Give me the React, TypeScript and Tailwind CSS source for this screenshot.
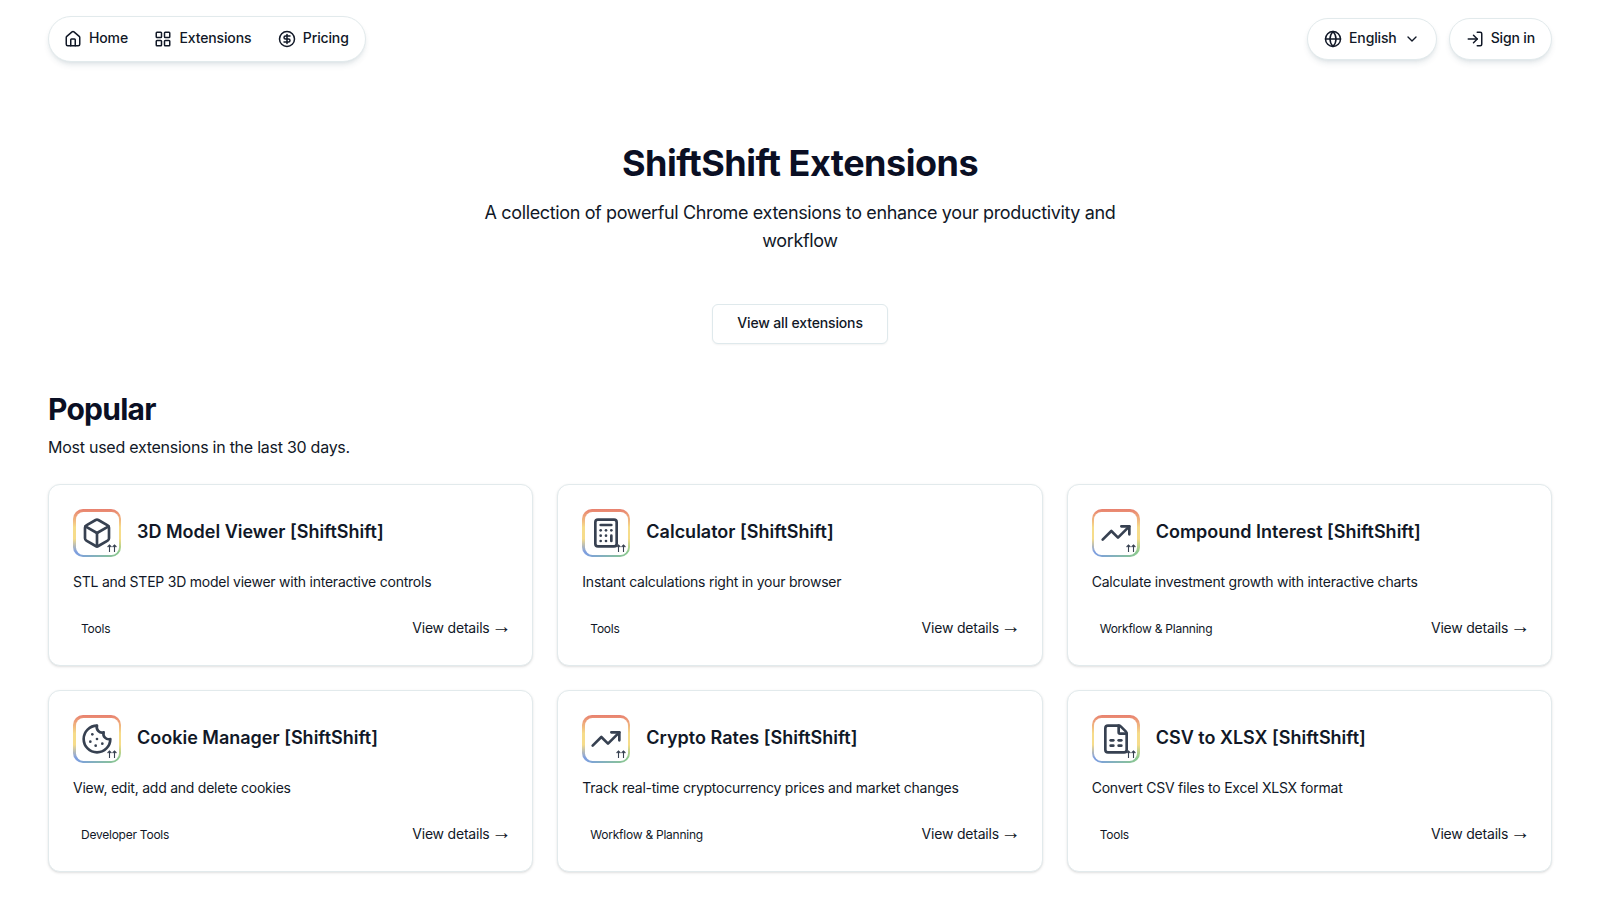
import { Box, Calculator, ChevronDown, CircleDollarSign, Cookie, FileSpreadsheet, Globe, House, LayoutGrid, LogIn, TrendingUp } from 'lucide-react'
import type { ComponentType, ReactNode } from 'react'

type Extension = {
  name: string
  description: string
  category: string
  icon: ComponentType<{ className?: string; strokeWidth?: number }>
}

const extensions: Extension[] = [
  { name: '3D Model Viewer [ShiftShift]', description: 'STL and STEP 3D model viewer with interactive controls', category: 'Tools', icon: Box },
  { name: 'Calculator [ShiftShift]', description: 'Instant calculations right in your browser', category: 'Tools', icon: Calculator },
  { name: 'Compound Interest [ShiftShift]', description: 'Calculate investment growth with interactive charts', category: 'Workflow & Planning', icon: TrendingUp },
  { name: 'Cookie Manager [ShiftShift]', description: 'View, edit, add and delete cookies', category: 'Developer Tools', icon: Cookie },
  { name: 'Crypto Rates [ShiftShift]', description: 'Track real-time cryptocurrency prices and market changes', category: 'Workflow & Planning', icon: TrendingUp },
  { name: 'CSV to XLSX [ShiftShift]', description: 'Convert CSV files to Excel XLSX format', category: 'Tools', icon: FileSpreadsheet },
]

const Pill = ({ children }: { children: ReactNode }) => (
  <div className="flex h-[42px] items-center rounded-full border border-[#e2eaec] bg-white px-4 text-sm font-medium tracking-[-0.01em] text-[#111827] shadow-md shadow-[#0f3a4a]/10">
    {children}
  </div>
)

const ExtensionIcon = ({ icon: Icon }: { icon: Extension['icon'] }) => (
  <div className="relative h-12 w-12 shrink-0 rounded-[10px] bg-[linear-gradient(180deg,#e8806f_0%,#f6dc8a_38%,#f6dc8a_62%,transparent_90%),linear-gradient(90deg,#7b9be6,#8ccb8a)] p-[2.5px]">
    <div className="flex h-full w-full items-center justify-center rounded-[7.5px] bg-white">
      <Icon className="h-8 w-8 shrink-0 text-[#374151]" />
    </div>
    <svg className="absolute bottom-[5px] right-[4px]" width="10" height="8" viewBox="0 0 10 8" fill="none" stroke="#374151" strokeWidth="1.1">
      <path d="M2.5 8V1M0.6 3 2.5 1l1.9 2M7.5 8V1M5.6 3 7.5 1l1.9 2" />
    </svg>
  </div>
)

const ExtensionCard = ({ extension }: { extension: Extension }) => (
  <div className="flex h-[182px] flex-col rounded-xl border border-[#e2eaec] bg-white px-6 pb-[26px] pt-6 shadow-sm">
    <div className="flex items-center gap-4">
      <ExtensionIcon icon={extension.icon} />
      <h3 className="pb-0.5 text-lg font-semibold text-[#111827]">{extension.name}</h3>
    </div>
    <p className="mt-[15px] text-sm tracking-[-0.017em] text-[#111827]">{extension.description}</p>
    <div className="mt-auto flex items-center justify-between">
      <span className="px-2 text-xs tracking-[-0.02em] text-[#111827]">{extension.category}</span>
      <span className="flex items-center gap-0.5 pb-px text-sm tracking-[-0.015em] text-[#111827]">
        View details
        <span className="-mr-[3px] -mt-1 h-5 font-['Liberation_Sans',sans-serif] text-[20px] leading-none">→</span>
      </span>
    </div>
  </div>
)

export default function App() {
  return (
    <div className="min-h-[900px] overflow-hidden bg-white px-12 font-['Inter',sans-serif]">
      <header className="flex items-center justify-between pt-4">
        <nav className="flex h-[46px] items-center gap-[26.5px] rounded-full border border-[#e2eaec] bg-white pl-[15px] pr-4 text-sm font-medium tracking-[-0.01em] text-[#111827] shadow-md shadow-[#0f3a4a]/10">
          <a className="flex items-center gap-[7px]"><House className="h-[18px] w-[18px]" /><span className="pb-0.5">Home</span></a>
          <a className="flex items-center gap-[7px]"><LayoutGrid className="h-[18px] w-[18px]" /><span className="pb-0.5">Extensions</span></a>
          <a className="flex items-center gap-[7px]"><CircleDollarSign className="h-[18px] w-[18px]" /><span className="pb-0.5">Pricing</span></a>
        </nav>
        <div className="flex items-center gap-3">
          <Pill>
            <Globe className="mr-[7px] h-[18px] w-[18px]" />
            <span className="pb-0.5">English</span>
            <ChevronDown className="ml-[7px] h-4 w-4" />
          </Pill>
          <Pill>
            <LogIn className="mr-[7px] h-[18px] w-[18px]" />
            <span className="pb-0.5">Sign in</span>
          </Pill>
        </div>
      </header>

      <section className="mt-[81px] flex flex-col items-center text-center">
        <h1 className="text-4xl font-bold tracking-[-0.014em] text-[#0a0f24]">ShiftShift Extensions</h1>
        <p className="mt-4 w-[672px] text-lg leading-7 tracking-[-0.02em] text-[#111827]">
          A collection of powerful Chrome extensions to enhance your productivity and workflow
        </p>
        <button type="button" className="mt-[49px] h-10 rounded-md border border-[#dfe9ec] bg-white px-6 pb-0.5 text-sm font-medium tracking-[-0.01em] text-[#111827] shadow-xs">
          View all extensions
        </button>
      </section>

      <section className="mt-[47px]">
        <h2 className="text-3xl font-bold tracking-tight text-[#0a0f24]">Popular</h2>
        <p className="mt-2 text-base tracking-[-0.016em] text-[#111827]">Most used extensions in the last 30 days.</p>
        <div className="mt-[25px] grid grid-cols-3 gap-6">
          {extensions.map((extension) => (
            <ExtensionCard key={extension.name} extension={extension} />
          ))}
        </div>
      </section>
    </div>
  )
}
